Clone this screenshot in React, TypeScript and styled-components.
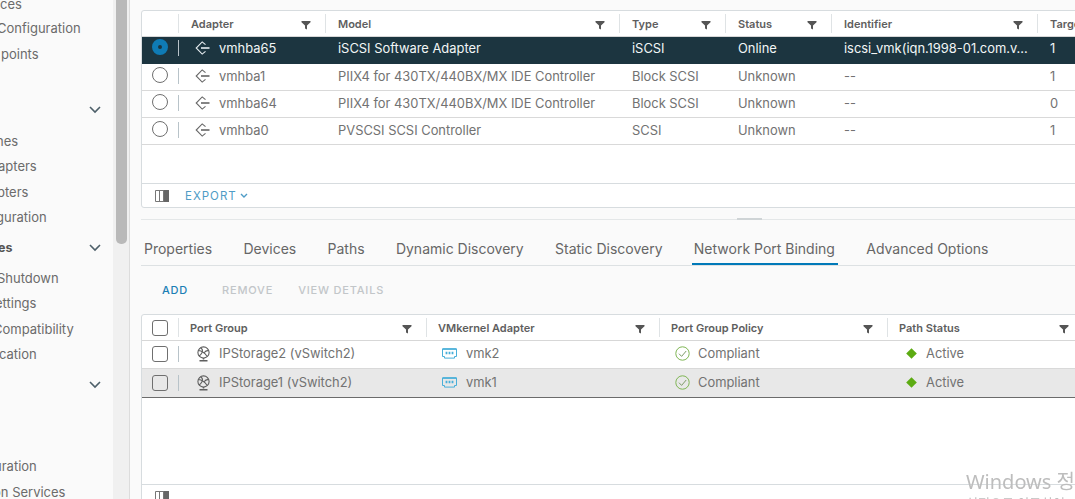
import React, { FC } from 'react'
import styled, { createGlobalStyle } from 'styled-components'

const GlobalStyle = createGlobalStyle`
  html, body {
    margin: 0;
    padding: 0;
    height: 499px;
    overflow: hidden;
    background: #fafafa;
    font-family: "Inter", "Liberation Sans", sans-serif;
  }
`

const ADAPTER_COLS = '36px 147px 294px 106px 106px 206px 1fr'
const BINDING_COLS = '36px 248px 233px 228px 196px'

const FilterIcon: FC = () => (
  <FilterSvg viewBox="0 0 10 10">
    <path d="M0.5 1h9v1.2L6 5.4V9.5L4 8.4V5.4L0.5 2.2z" fill="#555" />
  </FilterSvg>
)

const AdapterIcon: FC<{ light?: boolean }> = ({ light }) => (
  <IconSvg viewBox="0 0 15 14" width={15} height={14} fill="none" stroke={light ? '#e8eef1' : '#666'} strokeWidth="1.1">
    <path d="M10.5 3.6L7.2.9 1.2 7l6 6.1 3.3-2.7" />
    <path d="M6 7h8.5" strokeWidth="1.6" />
  </IconSvg>
)

const GlobeIcon: FC = () => (
  <IconSvg viewBox="0 0 15 16" width={15} height={16} fill="none" stroke="#5f5f5f" strokeWidth="1.1">
    <circle cx="7.5" cy="6.5" r="5.6" />
    <path d="M2.4 4.5c3 .3 6 1.8 8.6 5.8M4.6 1.8c2.4 1.5 2.2 3.4 1.2 5.2-.7 1.3-1.8 2.4-3 3M12.6 4.4c-2 .2-3.6 1-4.8 2.6" />
    <path d="M7.5 12v1.6M3.5 14.8h8" strokeWidth="1.5" />
  </IconSvg>
)

const VmkIcon: FC = () => (
  <IconSvg viewBox="0 0 15 11" width={15} height={11} fill="none" stroke="#49afd9" strokeWidth="1">
    <path d="M.5 1h14v7.5h-2v1.6h-10V8.5h-2z" />
    <path d="M.5 1h14" strokeWidth="1.6" />
    <path d="M4.5 3.8v2.4M7.5 3.8v2.4M10.5 3.8v2.4" strokeWidth="1.8" />
  </IconSvg>
)

const CompliantIcon: FC = () => (
  <IconSvg viewBox="0 0 15 15" width={15} height={15} fill="none" stroke="#7fb654" strokeWidth="1">
    <circle cx="7.5" cy="7.5" r="6.7" />
    <path d="M4 7.7l2.6 2.7L11.2 5" stroke="#7d9b68" />
  </IconSvg>
)

const ActiveIcon: FC = () => (
  <IconSvg viewBox="0 0 11 11" width={11} height={11}>
    <path d="M5.5.2l5.3 5.3-5.3 5.3L.2 5.5z" fill="#5cab12" />
  </IconSvg>
)

const ColumnsIcon: FC = () => (
  <ColumnsSvg viewBox="0 0 14 12" width={14} height={12}>
    <path d="M.5.5h13v11H.5zM4.5.5v11M8.5.5v11" fill="none" stroke="#777" />
    <rect x="9" y="0" width="5" height="12" fill="#666" />
  </ColumnsSvg>
)

const Chevron: FC = () => (
  <ChevronSvg viewBox="0 0 12 8" width={12} height={8} fill="none" stroke="#4d5f69" strokeWidth="1.6">
    <path d="M1 1l5 5 5-5" />
  </ChevronSvg>
)

const HeaderCell: FC<{ label: string; $pad?: number }> = ({ label, $pad }) => (
  <HeadCell $pad={$pad}>
    <HeadLabel>{label}</HeadLabel>
    <FilterIcon />
  </HeadCell>
)

const adapters = [
  { name: 'vmhba65', model: 'iSCSI Software Adapter', type: 'iSCSI', status: 'Online', id: 'iscsi_vmk(iqn.1998-01.com.v...', targets: '1' },
  { name: 'vmhba1', model: 'PIIX4 for 430TX/440BX/MX IDE Controller', type: 'Block SCSI', status: 'Unknown', id: '--', targets: '1' },
  { name: 'vmhba64', model: 'PIIX4 for 430TX/440BX/MX IDE Controller', type: 'Block SCSI', status: 'Unknown', id: '--', targets: '0' },
  { name: 'vmhba0', model: 'PVSCSI SCSI Controller', type: 'SCSI', status: 'Unknown', id: '--', targets: '1' },
]

const bindings = [
  { group: 'IPStorage2 (vSwitch2)', vmk: 'vmk2' },
  { group: 'IPStorage1 (vSwitch2)', vmk: 'vmk1', selected: true },
]

const tabs = ['Properties', 'Devices', 'Paths', 'Dynamic Discovery', 'Static Discovery', 'Network Port Binding', 'Advanced Options']

export default function App() {
  return (
    <Page>
      <GlobalStyle />
      <Sidebar>
        <NavItem $height={16} $top={-4}>ces</NavItem>
        <NavItem $height={32} $shift={-3}>Configuration</NavItem>
        <NavItem $height={20} $shift={1}>points</NavItem>
        <NavChevron $top={36}><Chevron /></NavChevron>
        <NavItem $height={26} $top={8} $shift={-4}>nes</NavItem>
        <NavItem $height={25} $shift={-2}>apters</NavItem>
        <NavItem $height={26} $shift={-3}>pters</NavItem>
        <NavItem $height={25} $shift={-4}>guration</NavItem>
        <NavHeading>es<Chevron /></NavHeading>
        <NavItem $height={26} $shift={-3}>Shutdown</NavItem>
        <NavItem $height={25} $shift={-5}>ettings</NavItem>
        <NavItem $height={26} $shift={-7}>Compatibility</NavItem>
        <NavItem $height={25} $shift={-1}>cation</NavItem>
        <NavChevron $top={8}><Chevron /></NavChevron>
        <NavSpacer />
        <NavItem $height={26} $shift={-6}>uration</NavItem>
        <NavItem $height={26} $shift={-7}>on Services</NavItem>
      </Sidebar>
      <Scrollbar>
        <ScrollThumb />
      </Scrollbar>
      <Main>
        <Card>
          <HeadRow $cols={ADAPTER_COLS}>
            <div />
            <HeaderCell label="Adapter" />
            <HeaderCell label="Model" />
            <HeaderCell label="Type" />
            <HeaderCell label="Status" />
            <HeaderCell label="Identifier" />
            <HeadCell><HeadLabel>Targets</HeadLabel></HeadCell>
          </HeadRow>
          {adapters.map((row, i) => (
            <AdapterRow key={row.name} $cols={ADAPTER_COLS} $selected={i === 0}>
              <SelectCell $lift={3}><Radio $checked={i === 0} /></SelectCell>
              <NameCell $pad={16} $gap={9}>
                <AdapterIcon light={i === 0} />
                {row.name}
              </NameCell>
              <Cell>{row.model}</Cell>
              <Cell>{row.type}</Cell>
              <Cell>{row.status}</Cell>
              <Cell>{row.id}</Cell>
              <Cell>{row.targets}</Cell>
            </AdapterRow>
          ))}
          <EmptyArea $height={38} />
          <Footer>
            <ColumnsIcon />
            <ExportLink>
              EXPORT
              <svg viewBox="0 0 8 6" width={8} height={6} fill="none" stroke="#4f9cc6" strokeWidth="1.4">
                <path d="M1 1l3 3 3-3" />
              </svg>
            </ExportLink>
          </Footer>
        </Card>

        <Splitter>
          <SplitHandle />
        </Splitter>

        <TabBar>
          {tabs.map(tab => (
            <Tab key={tab} $active={tab === 'Network Port Binding'}>{tab}</Tab>
          ))}
        </TabBar>

        <ActionBar>
          <ActionButton $enabled>ADD</ActionButton>
          <ActionButton>REMOVE</ActionButton>
          <ActionButton>VIEW DETAILS</ActionButton>
        </ActionBar>

        <BindingCard>
          <HeadRow $cols={BINDING_COLS}>
            <SelectCell><Checkbox /></SelectCell>
            <HeaderCell label="Port Group" $pad={11} />
            <HeaderCell label="VMkernel Adapter" $pad={11} />
            <HeaderCell label="Port Group Policy" $pad={11} />
            <HeaderCell label="Path Status" $pad={11} />
          </HeadRow>
          {bindings.map(row => (
            <BindingRow key={row.vmk} $cols={BINDING_COLS} $selected={row.selected}>
              <SelectCell><Checkbox /></SelectCell>
              <NameCell $pad={17} $gap={8}><GlobeIcon />{row.group}</NameCell>
              <IconCell $gap={9} $pad={16}><VmkIcon />{row.vmk}</IconCell>
              <IconCell $gap={8} $pad={16}><CompliantIcon />Compliant</IconCell>
              <IconCell $gap={9} $pad={19}><ActiveIcon />Active</IconCell>
            </BindingRow>
          ))}
          <EmptyArea $height={86} />
          <Footer>
            <ColumnsIcon />
          </Footer>
        </BindingCard>
      </Main>
      <Watermark>
        Windows 정품 인증
        <small>설정으로 이동하여 Windows를 정품 인증합니다.</small>
      </Watermark>
    </Page>
  )
}

const Page = styled.div`
  display: flex;
  width: 1075px;
  height: 499px;
  overflow: hidden;
  background: #fafafa;
`
const Sidebar = styled.nav`
  flex: 0 0 113px;
  height: 499px;
  overflow: hidden;
  background: #fafafa;
`
const NavItem = styled.div<{ $height: number; $shift?: number; $top?: number }>`
  height: ${({ $height }) => $height}px;
  margin-top: ${({ $top = 0 }) => $top}px;
  margin-left: ${({ $shift = 0 }) => $shift}px;
  line-height: ${({ $height }) => $height}px;
  font-size: 13px;
  color: #6b6b6b;
  white-space: nowrap;
`
const NavChevron = styled.div<{ $top: number }>`
  display: flex;
  align-items: center;
  justify-content: flex-end;
  height: 20px;
  margin-top: ${({ $top }) => $top}px;
  padding-right: 12px;
`
const NavHeading = styled.div`
  display: flex;
  align-items: center;
  justify-content: space-between;
  height: 35px;
  margin-left: -2px;
  padding-right: 12px;
  font-size: 12.5px;
  font-weight: 700;
  color: #565656;
`
const NavSpacer = styled.div`
  height: 58px;
`
const ChevronSvg = styled.svg`
  display: block;
`
const Scrollbar = styled.div`
  flex: 0 0 16px;
  height: 499px;
  background: #f0f0f0;
`
const ScrollThumb = styled.div`
  width: 11px;
  height: 244px;
  margin-left: 3px;
  border-radius: 0 0 5px 5px;
  background: #b9b9b9;
`
const Main = styled.main`
  flex: 1;
  min-width: 0;
  overflow: hidden;
  padding: 10px 0 0 11px;
  border-left: 1px solid #dcdcdc;
`
const Card = styled.section`
  box-sizing: border-box;
  width: 1000px;
  height: 198px;
  background: #fff;
  border: 1px solid #d7dcdf;
  border-radius: 3px;
`
const BindingCard = styled(Card)`
  height: 190px;
`
const HeadRow = styled.div<{ $cols: string }>`
  display: grid;
  grid-template-columns: ${({ $cols }) => $cols};
  height: 25px;
  border-bottom: 1px solid #d7d7d7;
`
const HeadCell = styled.div<{ $pad?: number }>`
  display: flex;
  align-items: center;
  justify-content: space-between;
  box-sizing: border-box;
  height: 19px;
  margin-top: 3px;
  padding: 0 14px 0 ${({ $pad = 12 }) => $pad}px;
  border-left: 1px solid #dfe3e5;
`
const HeadLabel = styled.span`
  font-size: 11px;
  font-weight: 600;
  color: #5e5e5e;
  white-space: nowrap;
`
const FilterSvg = styled.svg`
  width: 10px;
  height: 10px;
  margin-top: 2px;
  flex: none;
`
const IconSvg = styled.svg`
  flex: none;
`
const AdapterRow = styled.div<{ $cols: string; $selected?: boolean }>`
  display: grid;
  grid-template-columns: ${({ $cols }) => $cols};
  box-sizing: border-box;
  height: 27px;
  align-items: center;
  padding-bottom: ${({ $selected }) => ($selected ? 4 : 2)}px;
  background: ${({ $selected }) => ($selected ? '#1c3540' : '#fff')};
  color: ${({ $selected }) => ($selected ? '#f2f5f6' : '#727272')};
  border-bottom: 1px solid ${({ $selected }) => ($selected ? '#1c3540' : '#d9d9d9')};
  font-size: 12.9px;
`
const BindingRow = styled.div<{ $cols: string; $selected?: boolean }>`
  display: grid;
  grid-template-columns: ${({ $cols }) => $cols};
  box-sizing: border-box;
  height: ${({ $selected }) => ($selected ? 29 : 28)}px;
  align-items: center;
  padding-bottom: ${({ $selected }) => ($selected ? 1 : 2)}px;
  background: ${({ $selected }) => ($selected ? '#e8e8e8' : '#fff')};
  color: #727272;
  border-bottom: 1px solid ${({ $selected }) => ($selected ? '#6b6b6b' : '#d9d9d9')};
  font-size: 12.9px;
`
const SelectCell = styled.div<{ $lift?: number }>`
  display: flex;
  justify-content: center;
  align-items: center;
  height: 100%;
  padding-bottom: ${({ $lift = 0 }) => $lift}px;
  box-sizing: border-box;
`
const Radio = styled.span<{ $checked?: boolean }>`
  box-sizing: border-box;
  width: 16px;
  height: 16px;
  border-radius: 50%;
  background: ${({ $checked }) => ($checked ? '#1c3540' : '#fff')};
  border: ${({ $checked }) => ($checked ? '6px solid #0f7bb5' : '1px solid #6f6f6f')};
`
const Checkbox = styled.span`
  box-sizing: border-box;
  width: 16px;
  height: 16px;
  border: 1px solid #6f6f6f;
  border-radius: 3px;
`
const Cell = styled.div`
  padding-left: 13px;
  white-space: nowrap;
  overflow: hidden;
`
const NameCell = styled.div<{ $pad: number; $gap: number }>`
  display: flex;
  align-items: center;
  gap: ${({ $gap }) => $gap}px;
  height: 16px;
  padding-left: ${({ $pad }) => $pad}px;
  border-left: 1px solid #b8c3c9;
  white-space: nowrap;
`
const IconCell = styled.div<{ $gap: number; $pad: number }>`
  display: flex;
  align-items: center;
  gap: ${({ $gap }) => $gap}px;
  padding-left: ${({ $pad }) => $pad}px;
  white-space: nowrap;
`
const EmptyArea = styled.div<{ $height: number }>`
  height: ${({ $height }) => $height}px;
  border-bottom: 1px solid #d7dcdf;
`
const Footer = styled.div`
  display: flex;
  align-items: center;
  gap: 16px;
  height: 24px;
  padding-left: 13px;
`
const ColumnsSvg = styled.svg`
  flex: none;
`
const ExportLink = styled.span`
  display: inline-flex;
  align-items: center;
  gap: 3px;
  font-size: 11.5px;
  letter-spacing: 1px;
  color: #4f9cc6;
`
const Splitter = styled.div`
  display: flex;
  justify-content: center;
  width: 1216px;
  height: 1px;
  margin-top: 11px;
  background: #e4e7e8;
`
const SplitHandle = styled.div`
  width: 25px;
  height: 2px;
  margin-top: -1px;
  background: #cfd4d6;
`
const TabBar = styled.div`
  display: flex;
  gap: 31.3px;
  box-sizing: border-box;
  width: 1000px;
  height: 46px;
  padding: 20px 0 0 3px;
  border-bottom: 1px solid #dde1e3;
`
const Tab = styled.div<{ $active?: boolean }>`
  position: relative;
  height: 25px;
  font-size: 14px;
  color: #666;
  white-space: nowrap;
  ${({ $active }) =>
    $active
      ? `&::after {
          content: '';
          position: absolute;
          left: -2px;
          right: -3px;
          bottom: 0;
          height: 2px;
          background: #0079b8;
        }`
      : ''}
`
const ActionBar = styled.div`
  display: flex;
  align-items: center;
  gap: 25px;
  height: 48px;
  padding-left: 21px;
`
const ActionButton = styled.span<{ $enabled?: boolean }>`
  margin-right: ${({ $enabled }) => ($enabled ? 9 : 0)}px;
  font-size: 11px;
  font-weight: 500;
  letter-spacing: 0.8px;
  color: ${({ $enabled }) => ($enabled ? '#1a7fb5' : '#c2c6c9')};
`
const Watermark = styled.div`
  position: fixed;
  left: 966px;
  top: 469px;
  width: 300px;
  font-size: 20px;
  line-height: 26px;
  color: #bdbdbd;
  font-family: "Noto Sans", "Noto Sans CJK KR", sans-serif;
  white-space: nowrap;
  small {
    display: block;
    font-size: 13px;
    line-height: 17px;
  }
`
